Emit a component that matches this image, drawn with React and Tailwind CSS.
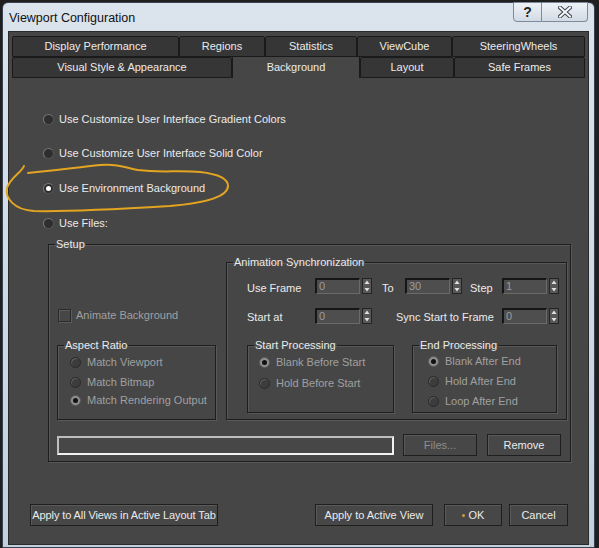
import React from 'react';

const Radio = ({ checked, disabled }) => {
  if (disabled) {
    return (
      <span className={`flex items-center justify-center w-[11px] h-[11px] rounded-full border shrink-0 ${checked ? 'bg-[#8e8e8e] border-[#5a5a5a]' : 'bg-[#3c3c3c] border-[#2a2a2a] shadow-[inset_1px_1px_0_#5e5e5e]'}`}>
        {checked && <span className="w-[5px] h-[5px] rounded-full bg-[#111]"></span>}
      </span>
    );
  }
  return (
    <span className="flex items-center justify-center w-[11px] h-[11px] rounded-full bg-[#2e2e2e] border border-[#777] border-b-[#555] border-r-[#555] shrink-0">
      {checked && <span className="w-[5px] h-[5px] rounded-full bg-white"></span>}
    </span>
  );
};

const Option = ({ label, checked, disabled }) => (
  <div className="flex items-center h-[16px] gap-[6px]">
    <Radio checked={checked} disabled={disabled} />
    <span className={disabled ? 'text-[#a0a0a0]' : 'text-[#ebebeb]'}>{label}</span>
  </div>
);

const Spinner = ({ value }) => (
  <div className="flex items-center gap-[2px] shrink-0">
    <div className="w-[45px] h-[16px] bg-[#4e4e4e] border-t-2 border-l-2 border-[#161616] border-b border-r border-b-[#6a6a6a] border-r-[#6a6a6a] text-[#9c9c9c] text-[11px] leading-[12px] pl-[2px]">
      {value}
    </div>
    <div className="w-[10px] h-[16px] flex flex-col border border-[#242424] bg-[#575757]">
      <svg width="8" height="7" viewBox="0 0 8 7" className="block">
        <path d="M4 1.5 L6.5 5 L1.5 5 Z" fill="#e0e0e0" />
      </svg>
      <svg width="8" height="7" viewBox="0 0 8 7" className="block">
        <path d="M1.5 2 L6.5 2 L4 5.5 Z" fill="#e0e0e0" />
      </svg>
    </div>
  </div>
);

const Group = ({ title, className = '', inner = '', children }) => (
  <fieldset className={`border border-[#1e1e1e] shadow-[1px_1px_0_#585858,inset_1px_1px_0_#585858] ${className}`}>
    <legend className="ml-[6px] px-[1px] leading-[14px] text-[#ebebeb]">{title}</legend>
    <div className={inner}>{children}</div>
  </fieldset>
);

const Button = ({ children, className = '', disabled }) => (
  <div className={`h-[22px] flex items-center justify-center border border-[#1f1f1f] bg-[#474747] shadow-[inset_1px_1px_0_#5a5a5a] ${disabled ? 'text-[#8e8e8e]' : 'text-[#ebebeb]'} ${className}`}>
    {children}
  </div>
);

const Tab = ({ label, width, active }) => (
  <div
    className={`flex items-center justify-center border border-[#1a1a1a] rounded-t-[2px] ${active ? 'bg-[#464646] border-b-0 -mt-[1px] h-[22px]' : 'bg-[#363636] h-[21px]'} text-[#ebebeb]`}
    style={{ width }}
  >
    {label}
  </div>
);

export default function App() {
  const row1 = [
    ['Display Performance', 167],
    ['Regions', 86],
    ['Statistics', 92],
    ['ViewCube', 95],
    ['SteeringWheels', 133],
  ];
  const row2 = [
    ['Visual Style & Appearance', 220],
    ['Background', 128, true],
    ['Layout', 94],
    ['Safe Frames', 131],
  ];

  return (
    <div className="relative w-[599px] h-[548px] overflow-hidden bg-[#1f1f1f] font-['Liberation_Sans',Arial,sans-serif] text-[11px] whitespace-nowrap">
      <div className="ml-[2px] mt-[2px] w-[593px] h-[546px] flex flex-col rounded-t-[6px] border border-[#394250] bg-gradient-to-b from-[#dbe3ec] to-[#c2d0de]">
        {/* Title bar */}
        <div className="h-[28px] flex items-start">
          <div className="pl-[6px] pt-[7px] text-[12.5px] leading-[16px] text-[#111]">Viewport Configuration</div>
          <div className="ml-auto mr-[6px] -mt-[1px] flex">
            <div className="w-[29px] h-[20px] flex items-center justify-center border border-[#7d8a99] rounded-bl-[4px] bg-gradient-to-b from-[#eef2f6] to-[#d2dbe5]">
              <span className="text-[14px] font-bold text-[#222] leading-none">?</span>
            </div>
            <div className="w-[46px] h-[20px] flex items-center justify-center border border-l-0 border-[#7d8a99] rounded-br-[4px] bg-gradient-to-b from-[#eef2f6] to-[#d2dbe5]">
              <svg width="14" height="12" viewBox="0 0 14 12">
                <path d="M2 1.5 L12 10.5 M12 1.5 L2 10.5" stroke="#3c4650" strokeWidth="4" strokeLinecap="square" />
                <path d="M2 1.5 L12 10.5 M12 1.5 L2 10.5" stroke="#f4f6f8" strokeWidth="2" strokeLinecap="square" />
              </svg>
            </div>
          </div>
        </div>

        {/* Client area */}
        <div className="mx-[5px] mb-[2px] flex-1 flex flex-col bg-[#464646] border border-[#2a2a2a] pt-[4px] pl-[3px] pr-[3px]">
          <div className="flex">
            {row1.map(([l, w]) => (
              <Tab key={l} label={l} width={w} />
            ))}
          </div>
          <div className="flex">
            {row2.map(([l, w, a]) => (
              <Tab key={l} label={l} width={w} active={a} />
            ))}
          </div>

          {/* Radios */}
          <div className="pl-[31px] pt-[31px] flex flex-col">
            <div className="flex items-center gap-[5px] h-[20px]">
              <Radio />
              <span className="text-[#ebebeb]">Use Customize User Interface Gradient Colors</span>
            </div>
            <div className="flex items-center gap-[5px] h-[20px] mt-[14px]">
              <Radio />
              <span className="text-[#ebebeb]">Use Customize User Interface Solid Color</span>
            </div>
            <div className="flex items-center gap-[5px] h-[20px] mt-[15px]">
              <Radio checked />
              <span className="text-[#ebebeb]">Use Environment Background</span>
            </div>
            <div className="flex items-center gap-[5px] h-[20px] mt-[15px]">
              <Radio />
              <span className="text-[#ebebeb]">Use Files:</span>
            </div>
          </div>

          {/* Setup */}
          <Group title="Setup" className="ml-[36px] mt-[4px] w-[523px]" inner="pl-[8px] pr-[3px] pb-[5px]">
            <div className="flex gap-[10px]">
              <div className="w-[159px] flex flex-col">
                <div className="mt-[56px] h-[16px] flex items-center gap-[5px] pl-[1px]">
                  <span className="w-[13px] h-[13px] border border-[#2a2a2a] bg-[#464646] shadow-[inset_1px_1px_0_#5c5c5c,1px_1px_0_#5c5c5c]"></span>
                  <span className="text-[#a0a0a0]">Animate Background</span>
                </div>
                <Group title="Aspect Ratio" className="mt-[15px] h-[82px]" inner="pl-[12px] pt-[2px] flex flex-col gap-[4px]">
                  <Option label="Match Viewport" disabled />
                  <Option label="Match Bitmap" disabled />
                  <div className="-mt-[2px]">
                    <Option label="Match Rendering Output" checked disabled />
                  </div>
                </Group>
              </div>

              <Group title="Animation Synchronization" className="w-[341px] mt-[4px]" inner="pl-[20px] pb-[6px]">
                <div className="mt-[9px] flex items-center h-[16px]">
                  <span className="w-[68px] text-[#ebebeb] pt-[5px]">Use Frame</span>
                  <Spinner value="0" />
                  <span className="w-[23px] ml-[10px] text-[#ebebeb] pt-[5px]">To</span>
                  <Spinner value="30" />
                  <span className="w-[32px] ml-[8px] text-[#ebebeb] pt-[5px]">Step</span>
                  <Spinner value="1" />
                </div>
                <div className="mt-[14px] flex items-center h-[16px]">
                  <span className="w-[68px] text-[#ebebeb] pt-[3px]">Start at</span>
                  <Spinner value="0" />
                  <span className="w-[106px] ml-[24px] text-[#ebebeb] pt-[3px]">Sync Start to Frame</span>
                  <Spinner value="0" />
                </div>
                <div className="mt-[14px] flex gap-[18px]">
                  <Group title="Start Processing" className="w-[147px] h-[75px]" inner="pl-[11px] pt-[2px] flex flex-col gap-[5px]">
                    <Option label="Blank Before Start" checked disabled />
                    <Option label="Hold Before Start" disabled />
                  </Group>
                  <Group title="End Processing" className="w-[145px] h-[75px]" inner="pl-[15px] pt-[1px] flex flex-col gap-[4px]">
                    <Option label="Blank After End" checked disabled />
                    <Option label="Hold After End" disabled />
                    <Option label="Loop After End" disabled />
                  </Group>
                </div>
              </Group>
            </div>

            <div className="mt-[14px] flex items-center">
              <div className="w-[337px] h-[19px] bg-[#474747] border-2 border-[#bdbdbd] border-b-[#f2f2f2] border-r-[#f2f2f2]"></div>
              <Button disabled className="ml-[9px] w-[74px] h-[20px]">Files...</Button>
              <Button className="ml-[10px] w-[74px] h-[20px]">Remove</Button>
            </div>
          </Group>

          {/* Bottom buttons */}
          <div className="mt-[42px] flex items-center pl-[18px] pr-[17px]">
            <Button className="w-[188px] tracking-[-0.1px]">Apply to All Views in Active Layout Tab</Button>
            <Button className="ml-auto w-[118px]">Apply to Active View</Button>
            <Button className="ml-[11px] w-[58px] gap-[4px]">
              <span className="w-[3px] h-[3px] rounded-full bg-[#d39a3a]"></span>
              OK
            </Button>
            <Button className="ml-[7px] w-[59px]">Cancel</Button>
          </div>
        </div>
      </div>

      {/* hand-drawn highlight */}
      <svg className="absolute inset-0 pointer-events-none" width="599" height="548" viewBox="0 0 599 548">
        <path
          d="M24 166 C22 172 10 178 7 188 C5 198 14 210 34 211 C70 212 120 209 170 206 C205 203 228 197 228 186 C228 178 218 174 200 172 C180 170 160 173 138 170 C126 168 118 163 100 165 C80 167 58 170 28 173"
          fill="none"
          stroke="#e3a422"
          strokeWidth="2"
          strokeLinecap="round"
        />
      </svg>
    </div>
  );
}
